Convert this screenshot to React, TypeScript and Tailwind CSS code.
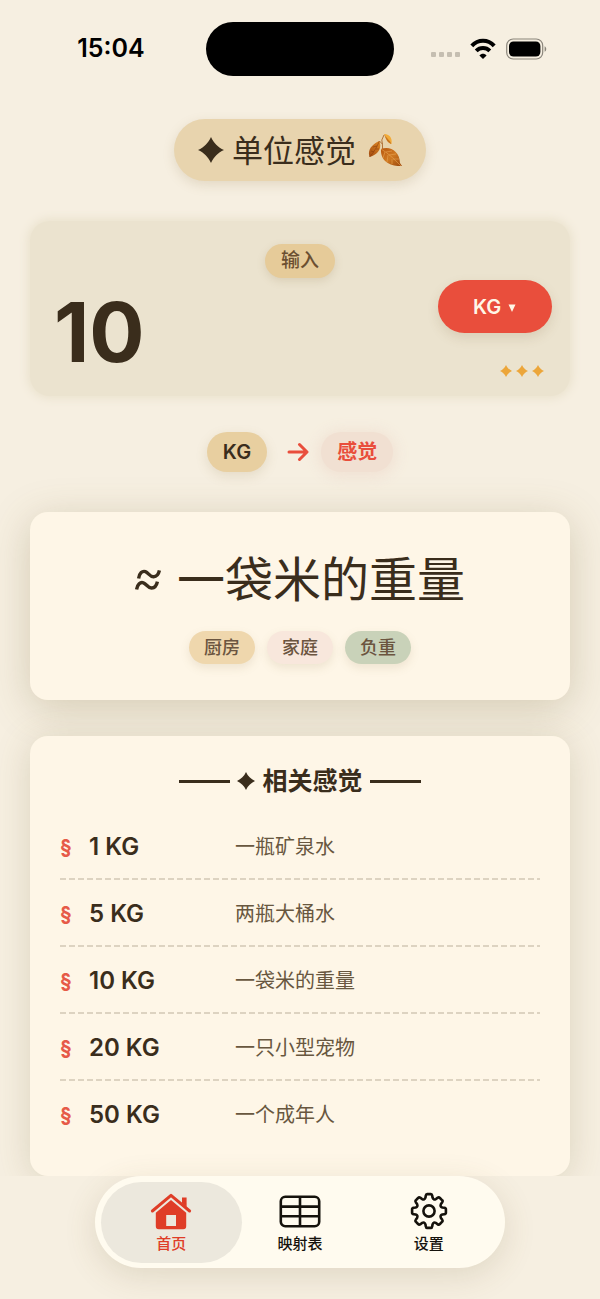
import React, { useState } from 'react';

interface Relation {
  value: string;
  feeling: string;
}

const relations: Relation[] = [
  { value: '1 KG', feeling: '一瓶矿泉水' },
  { value: '5 KG', feeling: '两瓶大桶水' },
  { value: '10 KG', feeling: '一袋米的重量' },
  { value: '20 KG', feeling: '一只小型宠物' },
  { value: '50 KG', feeling: '一个成年人' },
];

const tags = [
  { name: '厨房', className: 'bg-[#efd7ad]' },
  { name: '家庭', className: 'bg-[#f8e7dc]' },
  { name: '负重', className: 'bg-[#c9d2b9]' },
];

const Sparkle: React.FC<{ className?: string }> = ({ className }) => (
  <svg viewBox="0 0 24 24" fill="currentColor" className={className} aria-hidden="true">
    <path d="M12 0C14.6 5.6 18.4 9.4 24 12C18.4 14.6 14.6 18.4 12 24C9.4 18.4 5.6 14.6 0 12C5.6 9.4 9.4 5.6 12 0Z" />
  </svg>
);

const Leaves: React.FC = () => (
  <svg viewBox="0 0 34 34" className="h-[34px] w-[34px]" aria-hidden="true">
    <defs>
      <linearGradient id="leafBig" x1="0" y1="0" x2="1" y2="1">
        <stop offset="0" stopColor="#b9570f" />
        <stop offset="0.5" stopColor="#cf7a22" />
        <stop offset="1" stopColor="#9a460d" />
      </linearGradient>
      <linearGradient id="leafMid" x1="1" y1="0" x2="0" y2="1">
        <stop offset="0" stopColor="#e08a25" />
        <stop offset="1" stopColor="#a24a10" />
      </linearGradient>
    </defs>
    <path d="M16 1C20 0.6 25 4 23.4 11C20 10 18.6 6 16 1Z" fill="#f2ab38" />
    <path d="M16 1C18 5 22 7 23.4 11C20 10 18 7 16 1Z" fill="#c8741c" />
    <path d="M11.4 8C13.6 14 12 21 1.6 24C-1 17 4 11.4 11.4 8Z" fill="url(#leafMid)" />
    <path d="M11.4 8C9 14 6 19 1.6 24M9 13L5 14M8 16L11 16M6 19L3 18" stroke="#8a3c0b" strokeWidth="0.6" fill="none" />
    <path d="M11.4 8L14.4 11L14.6 16M16 2L13.8 7L14.4 11" stroke="#a9682c" strokeWidth="0.9" fill="none" />
    <path d="M13 16C22 12.6 31.6 18 32 30L34 33C24 34 12 29 13 16Z" fill="url(#leafBig)" />
    <path d="M13 16C20 20 26 26 33 33M18 19L24 18M21 22L28 21M25 26L31 26M17 19L15 25M20 22L19 29M24 26L24 31" stroke="#e8a552" strokeWidth="0.6" fill="none" />
  </svg>
);

const StatusBar: React.FC = () => (
  <header className="grid h-[97px] grid-cols-[1fr_188px_1fr] items-center text-black">
    <span className="pl-4 text-center text-[25px] leading-none font-semibold">15:04</span>
    <div className="h-[54px] rounded-full bg-black" />
    <div className="flex items-center justify-center gap-[10px] pr-4">
      <div className="flex items-center gap-[3px] pt-3">
        {[0, 1, 2, 3].map((dot) => (
          <span key={dot} className="h-[5px] w-[5px] rounded-[1px] bg-[#c5beb1]" />
        ))}
      </div>
      <svg viewBox="0 0 26 22" className="h-[22px] w-[26px]" fill="none" stroke="#000" strokeWidth="4" aria-hidden="true">
        <path d="M1.8 7.8C8 1.2 18 1.2 24.2 7.8" />
        <path d="M6.2 12.8C10 9 16 9 19.8 12.8" />
        <path d="M13 21L9.4 17.4C11.4 15.2 14.6 15.2 16.6 17.4Z" fill="#000" stroke="none" />
      </svg>
      <svg viewBox="0 0 41 22" className="h-[22px] w-[41px]" aria-hidden="true">
        <rect x="0.7" y="1" width="36" height="20" rx="6.5" fill="none" stroke="#8a857b" strokeWidth="1.2" />
        <rect x="3" y="3.4" width="31.4" height="15.2" rx="4.5" />
        <path d="M38.6 8.2C40.8 9.4 40.8 12.6 38.6 13.8Z" fill="#8a857b" />
      </svg>
    </div>
  </header>
);

const HomeIcon: React.FC = () => (
  <svg viewBox="0 0 42 38" className="h-[38px] w-[42px]" aria-hidden="true">
    <path d="M2.4 19L21 3.4L39.6 19" fill="none" stroke="currentColor" strokeWidth="3" strokeLinecap="round" strokeLinejoin="round" />
    <path d="M32 5.6H36.6V15L32 11Z" fill="currentColor" />
    <path
      fillRule="evenodd"
      d="M21 8L36.2 20.8V34.2Q36.2 37.2 33.2 37.2H8.8Q5.8 37.2 5.8 34.2V20.8ZM16.2 23V34H26V23Z"
      fill="currentColor"
    />
  </svg>
);

const TableIcon: React.FC = () => (
  <svg viewBox="0 0 42 38" className="h-[38px] w-[42px]" fill="none" stroke="currentColor" strokeWidth="2.6" aria-hidden="true">
    <rect x="1.8" y="4.8" width="38.4" height="29.4" rx="4.5" />
    <path d="M21 4.8V34.2M1.8 14.6H40.2M1.8 24.2H40.2" />
  </svg>
);

const toothPath = () => {
  const at = (deg: number, r: number) => {
    const a = ((deg - 90) * Math.PI) / 180;
    return `${(19 + r * Math.cos(a)).toFixed(2)} ${(19 + r * Math.sin(a)).toFixed(2)}`;
  };
  let d = '';
  for (let i = 0; i < 8; i++) {
    const c = i * 45;
    d += `${i === 0 ? 'M' : 'L'}${at(c - 15, 13.8)}L${at(c - 12, 15.6)}Q${at(c - 10, 17.2)} ${at(c - 6, 17)}`;
    d += `L${at(c + 6, 17)}Q${at(c + 10, 17.2)} ${at(c + 12, 15.6)}L${at(c + 15, 13.8)}Q${at(c + 22.5, 11.6)} ${at(c + 30, 13.8)}`;
  }
  return d + 'Z';
};

const GearIcon: React.FC = () => (
  <svg viewBox="0 0 38 38" className="h-[38px] w-[38px]" fill="none" stroke="currentColor" strokeWidth="2.6" strokeLinejoin="round" aria-hidden="true">
    <path d={toothPath()} />
    <circle cx="19" cy="19" r="5.6" />
  </svg>
);

const navItems = [
  { label: '首页', icon: <HomeIcon /> },
  { label: '映射表', icon: <TableIcon /> },
  { label: '设置', icon: <GearIcon /> },
];

const App: React.FC = () => {
  const [amount, setAmount] = useState('10');
  const [tab, setTab] = useState('首页');

  return (
    <div className="min-h-screen bg-[#f6efe1] font-['Inter','Noto_Sans_CJK_SC',sans-serif] text-[#3a2d1c]">
      <StatusBar />

      <main className="overflow-hidden px-[30px] pt-[22px]">
        <h1 className="mx-auto flex h-[62px] w-fit items-center rounded-full bg-[#e8d4ae] px-6 text-[31px] leading-none shadow-[0_4px_12px_rgba(150,125,80,0.2)]">
          <Sparkle className="mr-2 h-[26px] w-[26px]" />
          单位感觉
          <span className="ml-3"><Leaves /></span>
        </h1>

        <section className="mt-10 rounded-[20px] bg-[#ebe3cf] px-[18px] pt-[23px] pb-[10px] shadow-[0_0_8px_3px_#ebe3cf]">
          <label
            htmlFor="amount"
            className="mx-auto flex h-[34px] w-fit items-center rounded-full bg-[#e6cb99] px-4 text-[19px] font-medium text-[#6b4f31] shadow-[0_3px_8px_rgba(150,125,80,0.2)]"
          >
            输入
          </label>
          <div className="flex h-[108px] justify-between pl-[6px]">
            <input
              id="amount"
              value={amount}
              onChange={(e) => setAmount(e.target.value)}
              inputMode="decimal"
              className="min-w-0 flex-1 bg-transparent text-[82px] leading-none font-bold outline-none"
            />
            <div className="flex flex-col items-end pt-[2px]">
              <div className="relative">
                <select
                  aria-label="单位"
                  className="h-[53px] w-[114px] appearance-none rounded-full bg-[#e94e3c] pl-[35px] text-xl font-semibold text-[#fff6e6] shadow-[0_5px_12px_rgba(120,90,50,0.15)]"
                >
                  <option>KG</option>
                </select>
                <svg viewBox="0 0 8 8" className="pointer-events-none absolute top-6 right-9 h-2 w-2" fill="#fff6e6" aria-hidden="true">
                  <path d="M0.5 0.5H7.5L4 8Z" />
                </svg>
              </div>
              <div className="mt-8 mr-2 flex gap-1 text-[#eca63a]">
                <Sparkle className="h-3 w-3" />
                <Sparkle className="h-3 w-3" />
                <Sparkle className="h-3 w-3" />
              </div>
            </div>
          </div>
        </section>

        <div className="mt-9 flex h-10 items-center justify-center text-xl font-semibold">
          <span className="flex h-10 items-center rounded-full bg-[#e8cfa0] px-4 shadow-[0_4px_12px_rgba(150,125,80,0.18)]">KG</span>
          <svg viewBox="0 0 22 20" className="mr-3 ml-5 h-5 w-[22px]" fill="none" stroke="#e94e3c" strokeWidth="3" strokeLinecap="round" strokeLinejoin="round" aria-hidden="true">
            <path d="M2 10H19.5M12.5 2.5L20 10L12.5 17.5" />
          </svg>
          <span className="flex h-10 items-center rounded-full bg-[#f1e0d2] px-4 text-[#e94e3c] shadow-[0_2px_12px_4px_rgba(240,224,210,0.8)]">感觉</span>
        </div>

        <section className="relative mt-10 flex h-[188px] flex-col items-center rounded-[18px] bg-[#fef6e7] pt-8 shadow-[0_8px_40px_rgba(115,100,50,0.26)]">
          <p className="flex h-[72px] items-center text-[48px] leading-none">
            <svg viewBox="0 0 26 22" className="mr-4 h-[22px] w-[26px]" fill="none" stroke="currentColor" strokeWidth="3.4" role="img" aria-label="约等于">
              <path d="M3.6 9.4C4.4 4 7.4 1.6 10.4 2.6C13.4 3.6 15 8 18.6 7.8C21.6 7.6 23.6 5.4 24.4 1.4" />
              <path d="M1.6 20.6C2.4 15.2 5.4 12.8 8.4 13.8C11.4 14.8 13 19.2 16.6 19C19.6 18.8 21.6 16.6 22.4 12.6" />
            </svg>
            一袋米的重量
          </p>
          <ul className="mt-[15px] flex gap-3">
            {tags.map((tag) => (
              <li
                key={tag.name}
                className={`flex h-[33px] items-center rounded-full px-[15px] text-lg leading-none font-medium text-[#6b5540] shadow-[0_4px_10px_rgba(150,125,80,0.15)] ${tag.className}`}
              >
                {tag.name}
              </li>
            ))}
          </ul>
        </section>

        <section className="relative mt-9 rounded-[18px] bg-[#fef6e7] px-[30px] pt-[26px] pb-7 shadow-[0_4px_36px_rgba(115,100,50,0.2)]">
          <h2 className="flex h-[38px] items-center justify-center gap-[7px] text-[25px] leading-none font-semibold">
            <span className="h-[3px] w-[51px] bg-current" />
            <Sparkle className="h-[18px] w-[18px]" />
            相关感觉
            <span className="h-[3px] w-[51px] bg-current" />
          </h2>
          <table className="mt-[13px] w-full border-collapse text-left">
            <tbody>
              {relations.map((item) => (
                <tr
                  key={item.value}
                  className="h-[67px] bg-[repeating-linear-gradient(90deg,#ddd3c1_0_6px,transparent_6px_9px)] bg-[length:100%_2px] bg-bottom bg-no-repeat last:bg-none"
                >
                  <td className="w-[29px] p-0 text-xl font-bold text-[#e65a48]">§</td>
                  <th className="w-[146px] p-0 text-2xl font-semibold">{item.value}</th>
                  <td className="p-0 text-xl text-[#68573f]">{item.feeling}</td>
                </tr>
              ))}
            </tbody>
          </table>
        </section>
      </main>

      <div className="px-[30px] pb-[31px]">
        <nav className="relative mx-auto grid h-[92px] max-w-[410px] grid-cols-3 items-center rounded-full bg-[#fffbef] px-[6px] shadow-[0_8px_32px_rgba(115,95,50,0.16)]">
          {navItems.map((item) => (
            <button
              key={item.label}
              type="button"
              onClick={() => setTab(item.label)}
              className={
                tab === item.label
                  ? 'flex h-[81px] flex-col items-center rounded-full bg-[#ece8dd] pt-[10px] text-[#df3d27] first:-mr-2 last:-ml-2'
                  : 'flex h-[81px] flex-col items-center pt-[10px] text-[#15120c] first:-mr-2 last:-ml-2'
              }
            >
              {item.icon}
              <span className="mt-1 text-[15px] leading-5 font-medium">{item.label}</span>
            </button>
          ))}
        </nav>
      </div>
    </div>
  );
};

export default App;
